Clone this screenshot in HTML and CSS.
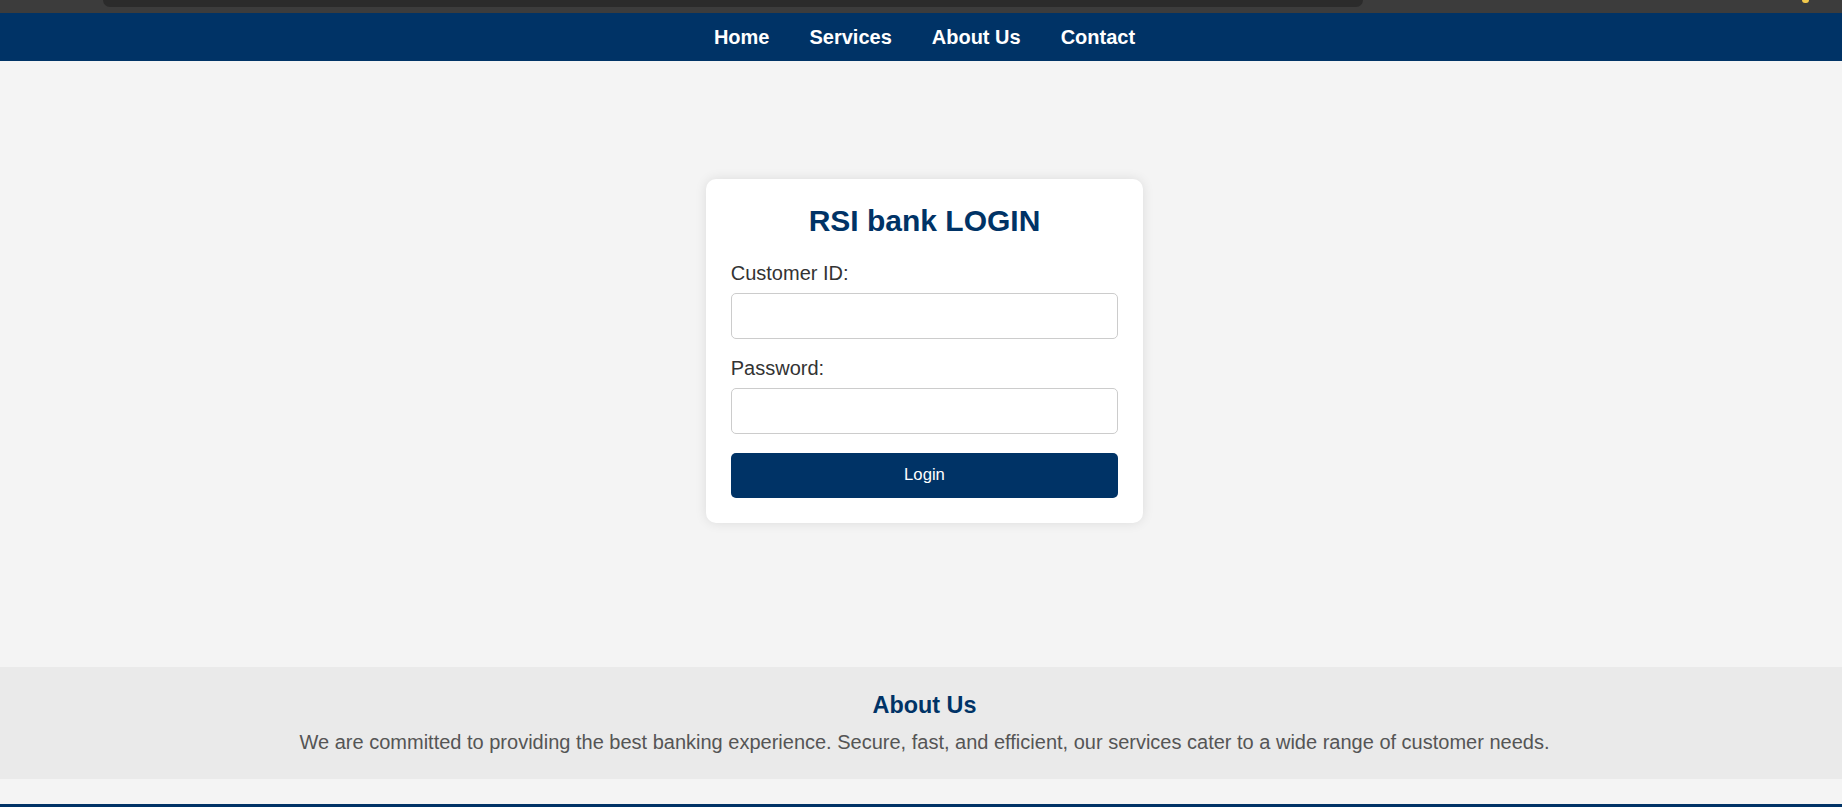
FILE: index.html
```html
<!DOCTYPE html>
<html lang="en">
<head>
<meta charset="utf-8">
<title>RSI bank LOGIN</title>
<link rel="stylesheet" href="styles.css">
</head>
<body>
<div class="chrome">
  <div class="omnibox"></div>
  <span class="dot"></span>
</div>
<nav class="topnav">
  <ul class="nav-list">
    <li><a href="#">Home</a></li>
    <li><a href="#">Services</a></li>
    <li><a href="#">About Us</a></li>
    <li><a href="#">Contact</a></li>
  </ul>
</nav>
<main class="main">
  <form class="card">
    <h2 class="card-title">RSI bank LOGIN</h2>
    <label class="field-label" for="cid">Customer ID:</label>
    <input class="field-input" id="cid" type="text">
    <label class="field-label" for="pwd">Password:</label>
    <input class="field-input last" id="pwd" type="password">
    <button class="btn" type="button">Login</button>
  </form>
</main>
<section class="about">
  <h3 class="about-title">About Us</h3>
  <p class="about-text">We are committed to providing the best banking experience. Secure, fast, and efficient, our services cater to a wide range of customer needs.</p>
</section>
<footer class="footer"></footer>
</body>
</html>
```

FILE: styles.css
```css
html, body {
  margin: 0;
  padding: 0;
}
body {
  background: #f4f4f4;
  font-family: "Liberation Sans", Arial, sans-serif;
  color: #333;
  overflow: hidden;
}
.chrome {
  height: 13px;
  background: #3c3c3c;
  display: flex;
  align-items: flex-start;
}
.omnibox {
  margin-left: 103px;
  width: 1260px;
  height: 7px;
  background: #2b2b2b;
  border-radius: 0 0 9px 9px;
}
.dot {
  margin-left: 439px;
  width: 7px;
  height: 3px;
  background: #f2c94c;
  border-radius: 0 0 4px 4px;
}
.topnav {
  background: #003366;
  height: 48px;
  display: flex;
  align-items: center;
  justify-content: center;
  padding-left: 7px;
}
.nav-list {
  list-style: none;
  margin: 0;
  padding: 0;
  display: flex;
  gap: 40px;
}
.nav-list a {
  color: #fff;
  text-decoration: none;
  font-weight: bold;
  font-size: 20px;
}
.main {
  display: flex;
  justify-content: center;
  padding: 118px 0 144px 7px;
}
.card {
  box-sizing: border-box;
  width: 437.5px;
  background: #fff;
  padding: 25px;
  border-radius: 10px;
  box-shadow: 0 0 12px rgba(0, 0, 0, 0.1);
  display: flex;
  flex-direction: column;
}
.card-title {
  margin: 0 0 24px;
  font-size: 30px;
  color: #003366;
  text-align: center;
  font-weight: bold;
}
.field-label {
  display: block;
  font-size: 20px;
  color: #333;
  margin-bottom: 7.5px;
}
.field-input {
  box-sizing: border-box;
  width: 100%;
  height: 46px;
  border: 1px solid #ccc;
  border-radius: 5px;
  margin: 0 0 18.5px;
  padding: 0 10px;
  font-size: 20px;
}
.field-input.last {
  margin-bottom: 19.5px;
}
.btn {
  height: 44.5px;
  width: 100%;
  background: #003366;
  color: #fff;
  border: none;
  border-radius: 5px;
  font-family: "Liberation Sans", Arial, sans-serif;
  font-size: 16.67px;
  cursor: pointer;
}
.about {
  background: #eaeaea;
  padding: 25px 25px 25px 32px;
  text-align: center;
}
.about-title {
  margin: 0 0 12.5px;
  font-size: 23.4px;
  color: #003366;
  font-weight: bold;
}
.about-text {
  margin: 0;
  font-size: 20px;
  color: #555;
}
.footer {
  margin-top: 25px;
  height: 60px;
  background: #003366;
}
```
